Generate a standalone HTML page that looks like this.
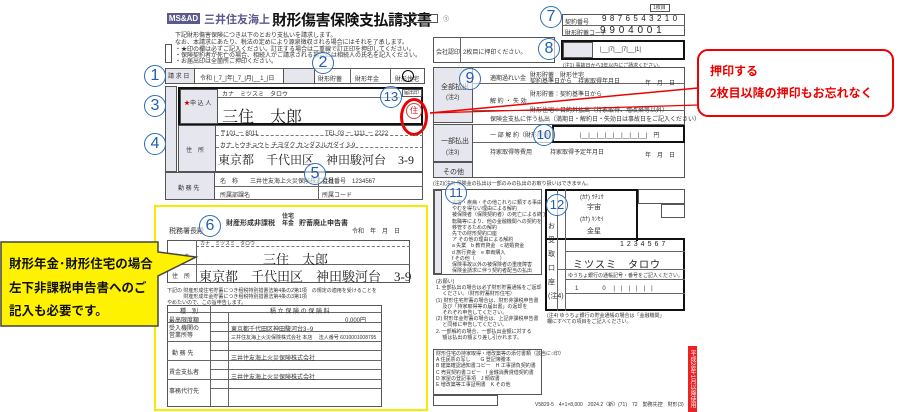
<!DOCTYPE html>
<html><head><meta charset="utf-8"><style>
*{margin:0;padding:0;box-sizing:border-box}
body{width:900px;height:412px;background:#fff;position:relative;overflow:hidden;font-family:"Liberation Sans","Noto Sans CJK JP",sans-serif;color:#222}
.a{position:absolute}
.b{position:absolute;border:1px solid #555}
.bk{position:absolute;border:2px solid #111}
.g{background:#e6e6ee}
.t{position:absolute;font-size:6px;white-space:nowrap;color:#333}
.c{position:absolute;width:22px;height:22px;border:1.5px solid #2a6db5;border-radius:50%;color:#1f5fb0;font-size:16px;text-align:center;line-height:19px;background:rgba(255,255,255,.6)}
.h{position:absolute;height:0;border-top:1px solid #666}
.v{position:absolute;width:0;border-left:1px solid #666}
.big{font-family:"Liberation Serif","Noto Serif CJK SC",serif;color:#222}
</style></head><body>

<!-- header -->
<div class="a" style="left:167px;top:13px;width:33px;height:11px;background:#5a5a8c;color:#fff;font-size:8px;font-weight:bold;text-align:center;line-height:11px">MS&amp;AD</div>
<div class="a" style="left:204px;top:11px;font-size:11px;color:#5a5a8c;font-weight:bold">三井住友海上</div>
<div class="a" style="left:272px;top:9px;font-size:15px;font-weight:bold;color:#111;letter-spacing:-0.5px">財形傷害保険支払請求書</div>
<div class="b" style="left:396px;top:14px;width:42px;height:9px"></div>
<div class="t" style="left:443px;top:14px">①</div>
<div class="t" style="left:175px;top:30px">下記財形傷害保険につき以下のとおり支払いを請求します。</div>
<div class="t" style="left:175px;top:37px">なお、本請求にあたり、税法の定めにより源泉徴収される場合にはそれを了承します。</div>
<div class="b" style="left:165px;top:44px;width:7px;height:19px"></div>
<div class="t" style="left:175px;top:44px">・★印の欄は必ずご記入ください。訂正する場合は二重線で訂正印を押印してください。</div>
<div class="t" style="left:175px;top:50px">・保険契約者が死亡の場合、相続人がご請求される場合には相続人の氏名を記入ください。</div>
<div class="t" style="left:175px;top:56px">・お届出印は全箇所ご押印ください。</div>

<!-- row 1 -->
<div class="b" style="left:165px;top:68px;width:260px;height:16px"></div>
<div class="b g" style="left:165px;top:68px;width:30px;height:16px"></div>
<div class="t" style="left:168px;top:71px">請 求 日</div>
<div class="t" style="left:200px;top:73px">令和 |_7_|年|_7_|月|__1_|日</div>
<div class="b g" style="left:283px;top:68px;width:32px;height:16px"></div>
<div class="t" style="left:318px;top:74px">財形貯蓄</div><div class="t" style="left:355px;top:74px">財形年金</div><div class="t" style="left:395px;top:74px">財形住宅</div>
<div class="v" style="left:350px;top:68px;height:16px"></div><div class="v" style="left:390px;top:68px;height:16px"></div>
<div class="a" style="left:402px;top:70px;width:12px;height:12px;border:1.5px solid #000;border-radius:50%"></div>

<!-- policyholder -->
<div class="b g" style="left:165px;top:86px;width:12px;height:86px"></div>
<div class="bk" style="left:178px;top:87px;width:245px;height:38px"></div>
<div class="b g" style="left:180px;top:89px;width:38px;height:35px"></div>
<div class="t" style="left:184px;top:98px;color:#c00">★</div><div class="t" style="left:190px;top:98px">申 込 人</div>
<div class="t" style="left:222px;top:89px">カナ　ミツスミ　タロウ</div>
<div class="h" style="left:218px;top:97px;width:182px"></div>
<div class="a big" style="left:222px;top:104px;font-size:16px">三住　太郎</div>
<div class="b" style="left:402px;top:89px;width:20px;height:8px"></div>
<div class="t" style="left:404px;top:89px;font-size:5px">届出印</div>
<div class="a" style="left:400px;top:98px;width:28px;height:38px;border:3px solid #e00;border-radius:50%"></div>
<div class="a" style="left:406px;top:103px;width:16px;height:16px;border:1px solid #c44;border-radius:50%;color:#c22;font-size:8px;text-align:center;line-height:14px">住</div>

<div class="b" style="left:178px;top:125px;width:245px;height:47px"></div>
<div class="b g" style="left:178px;top:125px;width:38px;height:47px"></div>
<div class="t" style="left:186px;top:145px">住　所</div>
<div class="t" style="left:220px;top:128px">〒101 － 8011</div><div class="t" style="left:325px;top:128px">TEL 03 － 1111 － 2222</div>
<div class="h" style="left:216px;top:135px;width:207px;border-top:1px dashed #777"></div>
<div class="t" style="left:220px;top:140px">カナ トウキョウト チヨダク カンダスルガダイ 3-9</div>
<div class="h" style="left:216px;top:147px;width:207px;border-top:1px dashed #777"></div>
<div class="a big" style="left:218px;top:151px;font-size:12px">東京都　千代田区　神田駿河台　3-9</div>
<div class="b" style="left:165px;top:172px;width:258px;height:28px"></div>
<div class="b g" style="left:165px;top:172px;width:50px;height:28px"></div>
<div class="t" style="left:178px;top:183px">勤 務 先</div>
<div class="h" style="left:215px;top:186px;width:208px"></div>
<div class="t" style="left:220px;top:176px">名　称　　三井住友海上火災保険株式会社</div>
<div class="t" style="left:322px;top:176px">社員番号　1234567</div>
<div class="t" style="left:220px;top:190px">所属部課名</div><div class="t" style="left:322px;top:190px">所属コード</div>
<div class="v" style="left:318px;top:172px;height:28px"></div>

<!-- right top -->
<div class="b" style="left:650px;top:4px;width:20px;height:8px"></div><div class="t" style="left:653px;top:4px;font-size:5px">1枚目</div>
<div class="b" style="left:562px;top:14px;width:123px;height:22px"></div>
<div class="h" style="left:562px;top:25px;width:123px"></div>
<div class="t" style="left:565px;top:17px">契約番号</div><div class="t" style="left:565px;top:28px">財形貯蓄コード</div>
<div class="a" style="left:602px;top:14px;font-size:8px;letter-spacing:3.4px">9876543210</div>
<div class="a" style="left:600px;top:25px;font-size:10px;letter-spacing:3.8px">9904001</div>
<div class="b" style="left:433px;top:37px;width:122px;height:26px"></div>
<div class="v" style="left:460px;top:37px;height:26px"></div>
<div class="t" style="left:436px;top:47px">会社認印</div><div class="t" style="left:463px;top:47px">2枚目に押印ください。</div>
<div class="bk" style="left:561px;top:40px;width:124px;height:20px"></div>
<div class="b g" style="left:563px;top:42px;width:30px;height:16px"></div>
<div class="t" style="left:600px;top:47px">|__|7|__|7|__|1|</div>
<div class="t" style="left:563px;top:62px;font-size:5px">(注1) 事故日から3年以内にご請求ください。</div>

<div class="b" style="left:433px;top:67px;width:252px;height:111px"></div>
<div class="b g" style="left:433px;top:67px;width:40px;height:56px"></div>
<div class="t" style="left:441px;top:82px;font-size:7px">全部払出</div><div class="t" style="left:446px;top:92px">(注2)</div>
<div class="h" style="left:473px;top:83px;width:212px"></div><div class="h" style="left:473px;top:110px;width:212px"></div>
<div class="h" style="left:433px;top:124px;width:252px"></div>
<div class="t" style="left:490px;top:73px">適期過れい金</div><div class="t" style="left:530px;top:70px">財形貯蓄　財形住宅</div>
<div class="t" style="left:530px;top:76px">契約基準日から　持家取得年月日</div>
<div class="t" style="left:645px;top:78px">年　月　日</div>
<div class="t" style="left:490px;top:96px">解 約 ・ 失 効</div><div class="t" style="left:530px;top:89px">財形貯蓄：契約基準日から</div>
<div class="t" style="left:530px;top:105px">財形住宅：目的外払出（持家取得、増改築等以外）</div>
<div class="t" style="left:490px;top:114px">保険金支払に伴う払出（満期日・解約日・失効日は事故日をご記入ください）</div>
<div class="b g" style="left:433px;top:124px;width:40px;height:38px"></div>
<div class="t" style="left:441px;top:136px;font-size:7px">一部払出</div><div class="t" style="left:446px;top:147px">(注3)</div>
<div class="h" style="left:473px;top:142px;width:212px"></div>
<div class="t" style="left:490px;top:130px">一 部 解 約（財形貯蓄）</div>
<div class="bk" style="left:552px;top:125px;width:133px;height:18px"></div>
<div class="t" style="left:580px;top:130px">|__|__|__|__|__|__|__|__|　円</div>
<div class="t" style="left:490px;top:147px">持家取得等費用</div><div class="t" style="left:550px;top:147px">持家取得予定年月日</div><div class="t" style="left:645px;top:150px">年　月　日</div>
<div class="b g" style="left:433px;top:162px;width:40px;height:16px"></div>
<div class="t" style="left:443px;top:167px;font-size:7px">その他</div>

<div class="t" style="left:433px;top:180px;font-size:5px">(注2)(注3) 保険金の払出は一部のみの払出のお取り扱いはできません。</div>
<div class="b" style="left:433px;top:189px;width:109px;height:86px"></div>
<div class="b g" style="left:434px;top:190px;width:8px;height:84px"></div>
<div class="t" style="left:452px;top:200px;line-height:6.2px;font-size:5px">災害・疾病・その他これらに類する事由<br>やむを得ない理由による解約<br>被保険者（保険契約者）の死亡による終了<br>転職等により、他の金融機関への契約を<br>移管するための解約<br>先での財形契約口座<br>ア その他の理由による解約<br>a 失業　b 教育資金　c 結婚資金<br>d 旅行資金　e 車両購入<br>f その他（　　　　　）<br>保険事故以外の被保険者の重度障害<br>保険金請求に伴う契約者配当の払出</div>
<div class="bk" style="left:545px;top:189px;width:93px;height:52px;border-bottom:none"></div>
<div class="bk" style="left:545px;top:238px;width:140px;height:73px"></div>
<div class="b" style="left:638px;top:189px;width:47px;height:15px"></div><div class="b" style="left:661px;top:204px;width:24px;height:14px"></div>
<div class="v" style="left:557px;top:189px;height:122px"></div><div class="v" style="left:565px;top:189px;height:122px"></div>
<div class="t" style="left:548px;top:220px;font-size:7px;line-height:14px">お<br>受<br>取<br>口<br>座<br>(注4)</div>
<div class="t" style="left:580px;top:192px">(ｶﾅ) ｳﾁｭｳ</div><div class="t" style="left:580px;top:202px;font-size:7px">　宇宙</div>
<div class="t" style="left:580px;top:214px">(ｶﾅ) ｷﾝｾｲ</div><div class="t" style="left:580px;top:226px;font-size:7px">　金星</div>
<div class="a" style="left:620px;top:241px;font-size:7px;letter-spacing:3px">1234567</div>
<div class="h" style="left:565px;top:251px;width:120px"></div>
<div class="a" style="left:573px;top:256px;font-size:10px;letter-spacing:1px">ミツスミ　タロウ</div>
<div class="h" style="left:557px;top:269px;width:128px"></div>
<div class="t" style="left:568px;top:272px;font-size:5px">ゆうちょ銀行の通帳記号・番号をご記入ください。</div>
<div class="h" style="left:565px;top:279px;width:120px"></div><div class="h" style="left:565px;top:293px;width:120px"></div>
<div class="t" style="left:575px;top:283px;font-size:6px">1　　　　0　 |　|　|　|　|　|</div>
<div class="t" style="left:547px;top:313px;font-size:5px;line-height:6px">(注4) ゆうちょ銀行の貯金通帳の場合は「金融機関」<br>欄にすべての項目をご記入ください。</div>
<div class="t" style="left:436px;top:279px;font-size:5px;line-height:6.2px">(お願い)<br>1. 全部払出の場合は必ず財形貯蓄通帳をご返却<br>　 ください。（財形貯蓄財形住宅）<br>(1) 財形住宅貯蓄の場合は、財形非課税申告書<br>　 及び「持家取得等の届出書」の返却を<br>　 それぞれ申告してください。<br>(2) 財形年金貯蓄の場合は、上記非課税申告書<br>　 と同様に申告してください。<br>2. 一部解約の場合、一部払出金額に対する<br>　 額は払出の額より差し引かれます。</div>
<div class="b" style="left:433px;top:349px;width:109px;height:46px"></div>
<div class="t" style="left:436px;top:351px;font-size:5px;line-height:6.2px">財形住宅の持家取得・増改築等の添付書類（該当に○印）<br>A 住民票の写し　　G 登記簿謄本<br>B 建築確認通知書コピー　H 工事請負契約書<br>C 売買契約書コピー　I 金銭消費貸借契約書<br>D 家屋の登記事項　J 領収書<br>E 増改築等工事証明書　K その他</div>
<div class="b" style="left:433px;top:395px;width:65px;height:11px"></div>
<div class="a" style="left:688px;top:346px;width:9px;height:66px;background:#e22;color:#fff;font-size:6px;writing-mode:vertical-rl;text-align:center">平成28年1月以降使用</div>
<div class="t" style="left:535px;top:401px;font-size:5px">V5829-5　4×1×8,000　2024.2（新）(71)　72　勤務先控　財形(3)</div>

<!-- yellow declaration box -->
<div class="a" style="left:154px;top:205px;width:274px;height:206px;border:2px solid #f5ea00"></div>
<div class="t" style="left:169px;top:226px;font-size:7px">税務署長殿</div>
<div class="t" style="left:226px;top:218px;font-size:7px;font-weight:bold">財産形成非課税</div>
<div class="t" style="left:282px;top:214px;font-size:6px;font-weight:bold;line-height:7px">住宅<br>年金</div>
<div class="t" style="left:299px;top:218px;font-size:7px;font-weight:bold">貯蓄廃止申告書</div>
<div class="t" style="left:352px;top:226px">令和　年　月　日</div>
<div class="b" style="left:167px;top:240px;width:243px;height:43px"></div>
<div class="h" style="left:196px;top:246px;width:214px;border-top:1px dashed #777"></div>
<div class="h" style="left:167px;top:264px;width:243px"></div>
<div class="v" style="left:196px;top:240px;height:43px"></div>
<div class="t" style="left:172px;top:252px">氏　名</div><div class="t" style="left:172px;top:271px">住　所</div>
<div class="t" style="left:200px;top:240px;font-size:5px">カナ　ミツスミ　タロウ</div>
<div class="a big" style="left:263px;top:249px;font-size:13px">三住　太郎</div>
<div class="a big" style="left:199px;top:266px;font-size:13px">東京都　千代田区　神田駿河台　3-9</div>
<div class="t" style="left:167px;top:288px;font-size:5px;line-height:6px">下記の 財産形成住宅貯蓄につき租税特別措置法第4条の2第1項　の規定の適用を受けることを<br>　　　 財産形成年金貯蓄につき租税特別措置法第4条の3第1項</div>
<div class="t" style="left:167px;top:299px;font-size:5px">やめたいので、この旨申告します。</div>
<div class="b" style="left:167px;top:305px;width:215px;height:102px"></div>
<div class="v" style="left:210px;top:305px;height:102px"></div><div class="v" style="left:228px;top:312px;height:95px"></div>
<div class="h" style="left:167px;top:312px;width:215px"></div><div class="h" style="left:167px;top:322px;width:215px"></div>
<div class="h" style="left:167px;top:341px;width:215px"></div><div class="h" style="left:167px;top:360px;width:215px"></div><div class="h" style="left:167px;top:379px;width:215px"></div>
<div class="h" style="left:210px;top:331px;width:172px"></div><div class="h" style="left:210px;top:350px;width:172px"></div><div class="h" style="left:210px;top:369px;width:172px"></div><div class="h" style="left:210px;top:388px;width:172px"></div>
<div class="t" style="left:180px;top:306px">種　別</div><div class="t" style="left:270px;top:306px">積 立 保 険 の 保 険 料</div>
<div class="t" style="left:169px;top:315px">最高限度額</div><div class="t" style="left:345px;top:315px">0,000円</div>
<div class="t" style="left:169px;top:326px;line-height:7px">受入機関の<br>営業所等</div>
<div class="t" style="left:231px;top:324px">東京都千代田区神田駿河台3−9</div>
<div class="t" style="left:231px;top:334px;font-size:5px">三井住友海上火災保険株式会社 本店　 法人番号 6010001008795</div>
<div class="t" style="left:172px;top:348px">勤 務 先</div><div class="t" style="left:231px;top:353px">三井住友海上火災保険株式会社</div>
<div class="t" style="left:169px;top:367px">賃金支払者</div><div class="t" style="left:231px;top:372px">三井住友海上火災保険株式会社</div>
<div class="t" style="left:169px;top:386px">事務代行先</div>

<!-- yellow callout -->
<svg class="a" style="left:0;top:240px" width="200" height="90"><path d="M1 2 H158 V12 L196 17 L158 36 V86 H1 Z" fill="#fff200" stroke="#444" stroke-width="1.5"/></svg>
<div class="a" style="left:9px;top:253px;font-size:12.5px;font-weight:bold;line-height:23.5px;color:#111">財形年金･財形住宅の場合<br>左下非課税申告書へのご<br>記入も必要です。</div>

<!-- red callout -->
<svg class="a" style="left:420px;top:45px" width="480" height="80"><path d="M10 68 L278 43" stroke="#e00" stroke-width="1.5"/><path d="M10 68 L278 60" stroke="#e00" stroke-width="1.2"/><rect x="278" y="5" width="195" height="66" rx="10" fill="#fff" stroke="#e00" stroke-width="2"/></svg>
<div class="a" style="left:710px;top:62px;font-size:12px;font-weight:bold;color:#e00">押印する</div>
<div class="a" style="left:710px;top:84px;font-size:12px;font-weight:bold;color:#e00">2枚目以降の押印もお忘れなく</div>

<!-- blue circled numbers -->
<div class="c" style="left:144px;top:65px">1</div>
<div class="c" style="left:312px;top:52px">2</div>
<div class="c" style="left:144px;top:95px">3</div>
<div class="c" style="left:144px;top:133px">4</div>
<div class="c" style="left:304px;top:163px">5</div>
<div class="c" style="left:199px;top:215px">6</div>
<div class="c" style="left:540px;top:6px">7</div>
<div class="c" style="left:538px;top:38px">8</div>
<div class="c" style="left:459px;top:68px">9</div>
<div class="c" style="left:533px;top:124px;font-size:13px">10</div>
<div class="c" style="left:445px;top:182px;font-size:13px">11</div>
<div class="c" style="left:546px;top:194px;font-size:13px">12</div>
<div class="c" style="left:380px;top:86px;font-size:13px">13</div>
</body></html>
